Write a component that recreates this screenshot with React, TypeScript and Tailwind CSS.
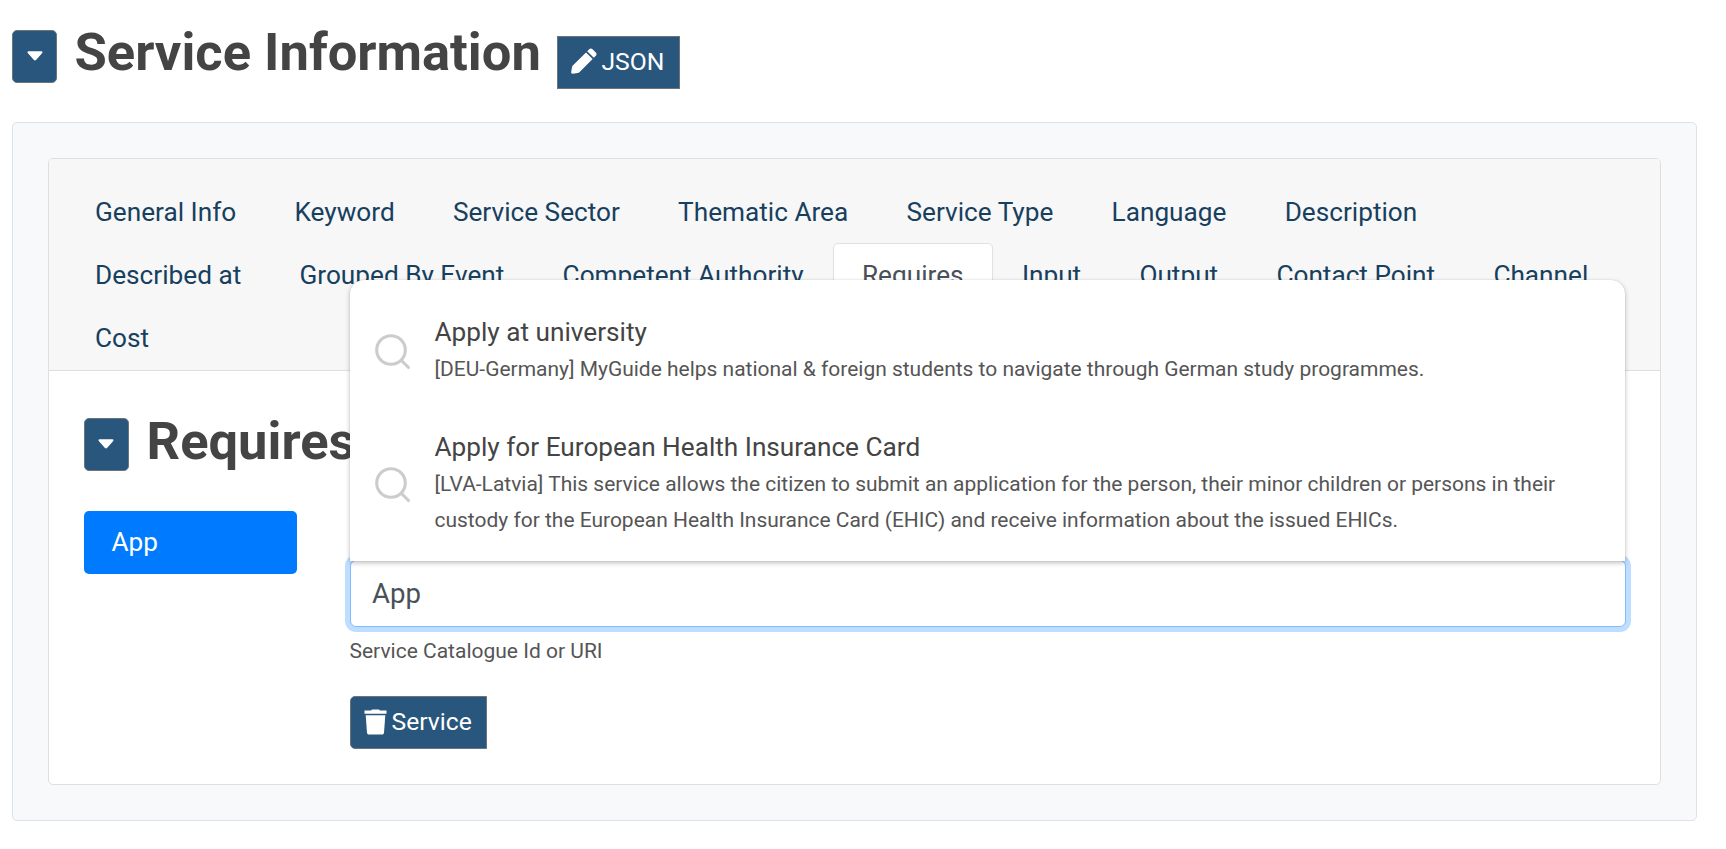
import React from "react";

const tabs: string[] = [
  "General Info",
  "Keyword",
  "Service Sector",
  "Thematic Area",
  "Service Type",
  "Language",
  "Description",
  "Described at",
  "Grouped By Event",
  "Competent Authority",
  "Requires",
  "Input",
  "Output",
  "Contact Point",
  "Channel",
  "Cost",
];

const suggestions = [
  {
    title: "Apply at university",
    text: "[DEU-Germany] MyGuide helps national & foreign students to navigate through German study programmes.",
  },
  {
    title: "Apply for European Health Insurance Card",
    text: "[LVA-Latvia] This service allows the citizen to submit an application for the person, their minor children or persons in their custody for the European Health Insurance Card (EHIC) and receive information about the issued EHICs.",
  },
];

function CollapseButton() {
  return (
    <button className="flex h-[53px] w-[45px] shrink-0 items-center justify-center rounded-[5px] border border-[#6c757d] bg-[#29567d]">
      <svg width="16" height="10" viewBox="0 0 17 10" fill="#fff" className="mt-[-2px]">
        <path d="M1.6 0h13.8c1 0 1.4 1 .8 1.700L9.600 9.200c-.6.7-1.600.7-2.200 0L.8 1.700C.2 1 .6 0 1.600 0z" />
      </svg>
    </button>
  );
}

function SearchIcon() {
  return (
    <svg width="36" height="36" viewBox="0 0 36 36" fill="none" stroke="#ccc" strokeWidth="3.100" strokeLinecap="round" className="mt-[3px] shrink-0">
      <circle cx="16" cy="16" r="14.300" />
      <path d="M26.500 26.500l7 7" />
    </svg>
  );
}

export default function App() {
  return (
    <div className="h-[849px] w-[1726px] overflow-hidden bg-white pl-[12px] font-['Roboto',sans-serif] text-[26.2px] leading-[38px] text-[#444]">
      <header className="flex h-[122px] items-start pt-[30px]">
        <CollapseButton />
        <h1 className="ml-[17.5px] mt-[-10px] w-[467px] whitespace-nowrap text-[52.5px] font-bold leading-[64px]">Service Information</h1>
        <button className="ml-[15px] mt-[6px] flex h-[53px] w-[123px] items-center border border-[#6c757d] bg-[#29567d] pl-[13px] text-[24.7px] text-white">
          <svg width="26" height="26" viewBox="0 0 26 26" fill="#fff" className="mt-[-4px]">
            <path d="M18.200 1.200c1-1 2.300-1 3.300 0l3.300 3.300c1 1 1 2.300 0 3.300l-2 2-6.600-6.600z" />
            <path d="M15 4.400l6.600 6.600L8.400 24.200c-.5.5-1 .7-1.700.8l-4.800.8C.8 26 0 25.200.2 24.100L1 19.300c.1-.7.3-1.200.8-1.700z" />
          </svg>
          <span className="ml-[5px] mt-[-2px]">JSON</span>
        </button>
      </header>

      <main className="h-[699px] w-[1685px] rounded-[5px] border border-[#dee2e6] bg-[#f8f9fa] px-[35px] pt-[35px]">
        <section className="h-[627px] w-[1613px] rounded-[5px] border border-[#dfdfdf] bg-white">
          <nav className="flex h-[212px] flex-wrap content-start gap-x-[0.25px] rounded-t-[4px] border-b border-[#dfdfdf] bg-[#f7f7f7] px-[17px] pt-[21px]">
            {tabs.map((tab) => (
              <a
                key={tab}
                className={
                  tab === "Requires"
                    ? "h-[63px] whitespace-nowrap rounded-t-[5px] border border-[#dee2e6] bg-white px-[28px] pt-[12px] text-[#495057]"
                    : "h-[63px] whitespace-nowrap border border-transparent px-[28px] pt-[12px] text-[#17405f]"
                }
              >
                {tab}
              </a>
            ))}
          </nav>

          <div className="flex px-[34.5px] pt-[47px]">
            <div className="w-[266px] shrink-0">
              <div className="flex items-start">
                <CollapseButton />
                <h2 className="ml-[18px] mt-[-9px] whitespace-nowrap text-[52.5px] font-bold leading-[64px]">Requires</h2>
              </div>
              <div className="mt-[38px] flex h-[63px] w-[213px] items-center rounded-[5px] bg-[#007bff] pb-[2px] pl-[28px] text-white">App</div>
            </div>

            <div className="relative mt-[142px] w-[1276px] shrink-0">
              <input
                className="block h-[67px] w-full rounded-[6px] border border-[#80bdff] bg-white px-[21.5px] text-[27.6px] text-[#495057] shadow-[0_0_0_5px_rgba(0,123,255,0.25)] outline-none"
                defaultValue="App"
              />
              <div className="mt-[8px] text-[21px] leading-[32px] text-[#555]">Service Catalogue Id or URI</div>
              <button className="mt-[29px] flex h-[53px] w-[137px] items-center rounded-l-[5px] border border-[#6c757d] bg-[#29567d] pl-[13px] text-[24.7px] text-white">
                <svg width="23" height="26" viewBox="0 0 23 26" fill="#fff" className="mt-[-2px]">
                  <path d="M.5 1.600h6.600L8 .4h7l.9 1.200h6.600V4.700H.5z" />
                  <path d="M1.700 6.200h19.600l-1.300 17.500c-.1 1.100-.9 1.800-2 1.800H5c-1.100 0-1.900-.7-2-1.800z" />
                </svg>
                <span className="ml-[5px] mt-[-1px]">Service</span>
              </button>

              <div className="absolute bottom-[188px] left-0 h-[281px] w-[1275px] rounded-t-[14px] bg-white pt-[34px] shadow-[0_2px_5px_rgba(32,33,36,0.28),0_0_1px_rgba(32,33,36,0.25)]">
                {suggestions.map((s) => (
                  <div key={s.title} className="mb-[42px] flex items-center pl-[25px]">
                    <SearchIcon />
                    <div className="ml-[24px] w-[1150px]">
                      <div className="h-[37px] leading-[37px]">{s.title}</div>
                      <div className="text-[20.98px] leading-[36px] text-[#555]">{s.text}</div>
                    </div>
                  </div>
                ))}
              </div>
            </div>
          </div>
        </section>
      </main>
    </div>
  );
}
